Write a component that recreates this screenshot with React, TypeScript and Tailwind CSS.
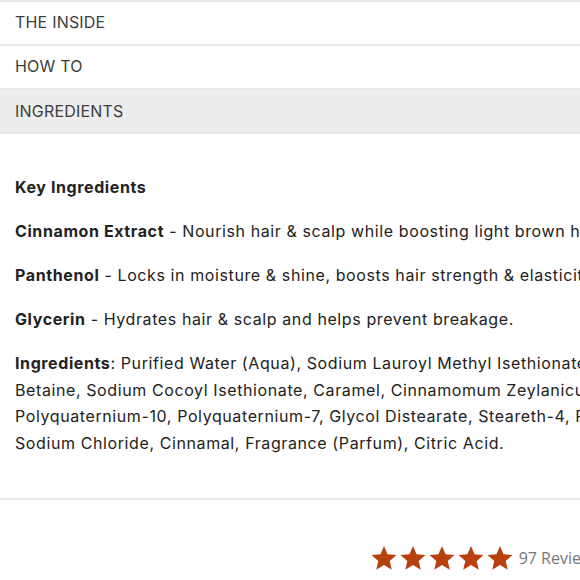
import React from "react";

const Star: React.FC = () => (
  <svg viewBox="0 0 24 24" className="w-[28px] h-[28px]">
    <path
      d="M12 1.8l3.05 7.05 7.65.6-5.8 5.05 1.75 7.5L12 18.05 5.35 22l1.75-7.5-5.8-5.05 7.65-.6z"
      fill="#b8420f"
    />
  </svg>
);

const tabs = ["THE INSIDE", "HOW TO", "INGREDIENTS"];

const App: React.FC = () => {
  return (
    <div className="w-[580px] h-[580px] overflow-hidden bg-white">
      <div className="w-[620px]">
        {/* Accordion tabs */}
        <div className="border-b-2 border-[#e8e8e8]">
          {tabs.map((t) => (
            <div
              key={t}
              className={
                t === "INGREDIENTS"
                  ? "h-[44px] border-t-2 border-[#e8e8e8] bg-[#ededed] flex items-center pb-[1px] px-[15px] text-[16px] tracking-[0.2px] text-[#3d3d3d] font-['Inter',sans-serif]"
                  : "h-[44px] border-t-2 border-[#e8e8e8] bg-white flex items-center pb-[2px] px-[15px] text-[16px] tracking-[0.2px] text-[#3d3d3d] font-['Inter',sans-serif]"
              }
            >
              {t}
            </div>
          ))}
        </div>

        {/* Ingredients panel */}
        <div className="px-[15px] pt-[40px] pb-[42px] border-b-2 border-[#e8e8e8] text-[16px] leading-[26px] tracking-[0.6px] text-[#222] font-['Inter',sans-serif] whitespace-nowrap">
          <p className="font-bold mb-[18px]">Key Ingredients</p>
          <p className="mb-[18px]">
            <span className="font-bold">Cinnamon Extract</span> - Nourish hair &amp; scalp while boosting light brown hair color.
          </p>
          <p className="mb-[18px]">
            <span className="font-bold">Panthenol</span> - Locks in moisture &amp; shine, boosts hair strength &amp; elasticity.
          </p>
          <p className="mb-[18px]">
            <span className="font-bold">Glycerin</span> - Hydrates hair &amp; scalp and helps prevent breakage.
          </p>
          <div className="leading-[26.5px]">
            <p>
              <span className="font-bold">Ingredients</span>: Purified Water (Aqua), Sodium Lauroyl Methyl Isethionate, Cocamidopropyl
            </p>
            <p>Betaine, Sodium Cocoyl Isethionate, Caramel, Cinnamomum Zeylanicum Bark Extract,</p>
            <p>Polyquaternium-10, Polyquaternium-7, Glycol Distearate, Steareth-4, Phenoxyethanol,</p>
            <p>Sodium Chloride, Cinnamal, Fragrance (Parfum), Citric Acid.</p>
          </div>
        </div>

        {/* Reviews */}
        <div className="flex justify-end items-center pt-[44px] pr-[19px]">
          <div className="flex items-center gap-[1px]">
            <Star />
            <Star />
            <Star />
            <Star />
            <Star />
          </div>
          <span className="ml-[5px] text-[16px] text-[#777] font-['Open_Sans',sans-serif]">97 Reviews</span>
        </div>
      </div>
    </div>
  );
};

export default App;
